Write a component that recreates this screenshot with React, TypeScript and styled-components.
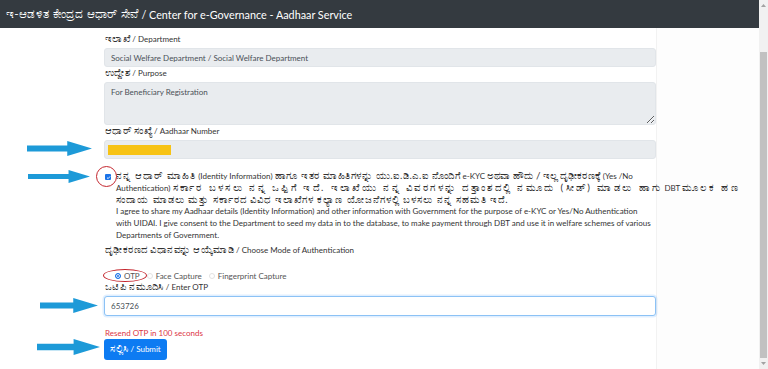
import React from "react";
import styled, { createGlobalStyle } from "styled-components";

const GlobalStyle = createGlobalStyle`
  html, body { margin: 0; padding: 0; background: #fff; }
  body { font-family: Lato, "Open Sans", "Noto Sans", sans-serif; overflow: hidden; }
  * { box-sizing: border-box; }
`;

const Page = styled.div`
  display: flex;
  width: 768px;
  height: 369px;
  overflow: hidden;
`;

const Main = styled.div`
  flex: 1;
  display: flex;
  flex-direction: column;
  min-width: 0;
`;

const Header = styled.header`
  height: 28px;
  flex: none;
  background: #343a40;
  color: #fff;
  font-size: 10.8px;
  display: flex;
  align-items: center;
  padding-left: 6px;
  white-space: nowrap;
`;

const Kn = styled.span<{ $size?: number; $ls?: number }>`
  font-size: ${(p) => p.$size ?? 1.25}em;
  letter-spacing: ${(p) => p.$ls ?? 0.4}px;
  line-height: 0;
`;

const Body = styled.div`
  flex: 1;
  display: flex;
`;

const Gutter = styled.div`
  width: 104px;
  flex: none;
`;

const Form = styled.div`
  width: 552px;
  flex: none;
  padding-top: 6px;
  display: flex;
  flex-direction: column;
  font-size: 8px;
  color: #333;
`;

const Side = styled.div`
  flex: 1;
  background: #fdfdfd;
  border-left: 1px solid #f2f2f2;
`;

const Label = styled.label<{ $mt?: number }>`
  display: block;
  height: 11px;
  line-height: 11px;
  margin: ${(p) => p.$mt ?? 0}px 0 3px 1px;
  white-space: nowrap;
`;

const Field = styled.div`
  position: relative;
  margin-bottom: 1px;
`;

const Input = styled.input<{ $focus?: boolean }>`
  display: block;
  width: 100%;
  height: ${(p) => (p.$focus ? 20 : 19)}px;
  padding: 0 6px;
  font: inherit;
  font-size: 8px;
  color: #495057;
  background: ${(p) => (p.$focus ? "#fff" : "#e9ecef")};
  border: 1px solid ${(p) => (p.$focus ? "#8cc2f5" : "#e1e5e9")};
  border-radius: 3px;
  box-shadow: ${(p) => (p.$focus ? "0 0 0 1.5px rgba(0,123,255,0.12)" : "none")};
  outline: none;
`;

const TextArea = styled.textarea`
  display: block;
  width: 100%;
  height: 43px;
  padding: 4px 6px;
  font: inherit;
  font-size: 8px;
  color: #495057;
  background: #e9ecef;
  border: 1px solid #e1e5e9;
  border-radius: 3px;
  resize: vertical;
  outline: none;
`;

const Masked = styled.span`
  position: absolute;
  left: 4px;
  top: 5px;
  width: 63px;
  height: 10px;
  background: #f7c315;
`;

const Consent = styled.div`
  position: relative;
  display: flex;
  align-items: flex-start;
  margin-top: 11px;
`;

const CheckBox = styled.span`
  flex: none;
  width: 6px;
  height: 6px;
  margin: 3px 5px 0 1px;
  border-radius: 1px;
  background: #1a73e8;
  display: flex;
  align-items: center;
  justify-content: center;
`;

const ConsentText = styled.p`
  margin: 0;
  line-height: 11.8px;
  white-space: nowrap;
`;

const RadioRow = styled.div`
  position: relative;
  display: flex;
  align-items: center;
  height: 12px;
  margin: 11px 0 0 11px;
`;

const RadioItem = styled.span`
  display: flex;
  align-items: center;
  gap: 3px;
  margin-right: 7px;
  color: #555;
`;

const Radio = styled.span<{ $on?: boolean }>`
  width: 6px;
  height: 6px;
  border-radius: 50%;
  border: ${(p) => (p.$on ? "1.5px solid #1a73e8" : "1px solid #e2e2e2")};
  background: ${(p) => (p.$on ? "#1a73e8" : "#fff")};
  box-shadow: ${(p) => (p.$on ? "inset 0 0 0 1px #fff" : "none")};
`;

const Resend = styled.div`
  color: #dc3545;
  line-height: 12px;
  margin: 10px 0 0 1px;
`;

const ButtonRow = styled.div`
  position: relative;
`;

const SubmitButton = styled.button`
  height: 21px;
  width: 63px;
  padding: 0;
  font: inherit;
  font-size: 8px;
  color: #fff;
  background: #0d7bf2;
  border: none;
  border-radius: 3px;
  white-space: nowrap;
`;

const Arrow = styled.svg<{ $left: number; $top: number }>`
  position: absolute;
  left: ${(p) => p.$left}px;
  top: ${(p) => p.$top}px;
`;

const Ring = styled.span<{ $left: number; $top: number; $w: number; $h: number }>`
  position: absolute;
  left: ${(p) => p.$left}px;
  top: ${(p) => p.$top}px;
  width: ${(p) => p.$w}px;
  height: ${(p) => p.$h}px;
  border: 1.5px solid #c4262e;
  border-radius: 50%;
`;

const ScrollBar = styled.div`
  width: 9px;
  flex: none;
  background: #f1f1f1;
  display: flex;
  flex-direction: column;
  align-items: center;
`;

const ScrollArrow = styled.span`
  height: 11px;
  flex: none;
  display: flex;
  align-items: center;
  justify-content: center;
`;

const Track = styled.div`
  flex: 1;
  width: 100%;
  display: flex;
  padding: 41px 1px 0;
`;

const Thumb = styled.div`
  flex: 1;
  background: #c1c1c1;
`;

function BlueArrow({ left, top, w, h }: { left: number; top: number; w: number; h: number }) {
  const head = w - h * 1.65;
  const s1 = h * 0.3;
  const s2 = h * 0.7;
  return (
    <Arrow $left={left} $top={top} width={w} height={h} viewBox={`0 0 ${w} ${h}`}>
      <polygon
        points={`0,${s1} ${head},${s1} ${head},0 ${w},${h / 2} ${head},${h} ${head},${s2} 0,${s2}`}
        fill="#1d9ad8"
      />
    </Arrow>
  );
}

export default function App() {
  return (
    <Page>
      <GlobalStyle />
      <Main>
        <Header>
          <Kn $size={1.1} $ls={0.3}>ಇ-ಆಡಳಿತ ಕೇಂದ್ರದ ಆಧಾರ್ ಸೇವೆ</Kn>&nbsp;/ Center for e-Governance - Aadhaar Service
        </Header>
        <Body>
          <Gutter />
          <Form>
            <Label><Kn>ಇಲಾಖೆ</Kn> / Department</Label>
            <Field>
              <Input readOnly value="Social Welfare Department / Social Welfare Department" />
            </Field>
            <Label><Kn>ಉದ್ದೇಶ</Kn> / Purpose</Label>
            <Field>
              <TextArea readOnly value="For Beneficiary Registration" />
            </Field>
            <Label><Kn>ಆಧಾರ್ ಸಂಖ್ಯೆ</Kn> / Aadhaar Number</Label>
            <Field>
              <Input readOnly value="" />
              <Masked />
              <BlueArrow left={-77} top={1} w={65} h={15} />
            </Field>
            <Consent>
              <CheckBox>
                <svg width="5" height="5" viewBox="0 0 10 10">
                  <path d="M2 5.2 L4.2 7.3 L8.2 2.8" stroke="#fff" strokeWidth="1.8" fill="none" />
                </svg>
              </CheckBox>
              <ConsentText>
                <Kn $ls={1.1}>ನನ್ನ ಆಧಾರ್ ಮಾಹಿತಿ</Kn> (Identity Information) <Kn $ls={0.6}>ಹಾಗೂ ಇತರ ಮಾಹಿತಿಗಳನ್ನು ಯು.ಐ.ಡಿ.ಎ.ಐ ನೊಂದಿಗೆ</Kn> e-KYC <Kn $ls={0.1}>ಅಥವಾ ಹೌದು / ಇಲ್ಲ ದೃಢೀಕರಣಕ್ಕೆ</Kn> (Yes /No
                <br />
                Authentication) <Kn $ls={2.4}>ಸರ್ಕಾರ ಬಳಸಲು ನನ್ನ ಒಪ್ಪಿಗೆ ಇದೆ. ಇಲಾಖೆಯು ನನ್ನ ವಿವರಗಳನ್ನು ದತ್ತಾಂಶದಲ್ಲಿ ನಮೂದು (ಸೀಡ್) ಮಾಡಲು ಹಾಗು</Kn> DBT <Kn $ls={2.4}>ಮೂಲಕ ಹಣ</Kn>
                <br />
                <Kn $ls={1.0}>ಸಂದಾಯ ಮಾಡಲು ಮತ್ತು ಸರ್ಕಾರದ ವಿವಿಧ ಇಲಾಖೆಗಳ ಕಲ್ಯಾಣ ಯೋಜನೆಗಳಲ್ಲಿ ಬಳಸಲು ನನ್ನ ಸಹಮತಿ ಇದೆ.</Kn>
                <br />
                I agree to share my Aadhaar details (Identity Information) and other information with Government for the purpose of e-KYC or Yes/No Authentication
                <br />
                with UIDAI. I give consent to the Department to seed my data in to the database, to make payment through DBT and use it in welfare schemes of various
                <br />
                Departments of Government.
              </ConsentText>
              <Ring $left={-8} $top={-5} $w={21} $h={21} />
              <BlueArrow left={-76} top={-1} w={62} h={13} />
            </Consent>
            <Label $mt={3}><Kn>ದೃಢೀಕರಣದ ವಿಧಾನವನ್ನು ಆಯ್ಕೆಮಾಡಿ</Kn> / Choose Mode of Authentication</Label>
            <RadioRow>
              <RadioItem>
                <Radio $on />
                OTP
              </RadioItem>
              <RadioItem>
                <Radio />
                Face Capture
              </RadioItem>
              <RadioItem>
                <Radio />
                Fingerprint Capture
              </RadioItem>
              <Ring $left={-12} $top={-1} $w={44} $h={13} />
            </RadioRow>
            <Label><Kn>ಒಟಿಪಿ ನಮೂದಿಸಿ</Kn> / Enter OTP</Label>
            <Field>
              <Input $focus readOnly value="653726" />
              <BlueArrow left={-64} top={2} w={58} h={15} />
            </Field>
            <Resend>Resend OTP in 100 seconds</Resend>
            <ButtonRow>
              <SubmitButton><Kn>ಸಲ್ಲಿಸಿ</Kn> / Submit</SubmitButton>
              <BlueArrow left={-67} top={0} w={63} h={16} />
            </ButtonRow>
          </Form>
          <Side />
        </Body>
      </Main>
      <ScrollBar>
        <ScrollArrow>
          <svg width="5" height="3" viewBox="0 0 5 3">
            <polygon points="0,3 2.5,0 5,3" fill="#a3a3a3" />
          </svg>
        </ScrollArrow>
        <Track>
          <Thumb />
        </Track>
        <ScrollArrow>
          <svg width="5" height="3" viewBox="0 0 5 3">
            <polygon points="0,0 2.5,3 5,0" fill="#a3a3a3" />
          </svg>
        </ScrollArrow>
      </ScrollBar>
    </Page>
  );
}
